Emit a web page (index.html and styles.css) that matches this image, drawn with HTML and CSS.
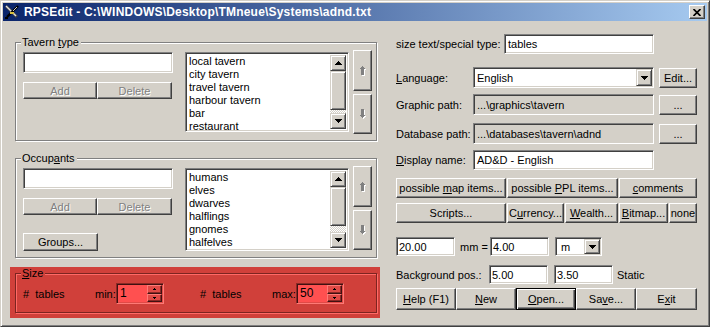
FILE: index.html
```html
<!DOCTYPE html>
<html lang="en">
<head>
  <meta charset="UTF-8" />
  <title>RPSEdit</title>
  <link rel="stylesheet" href="styles.css">
</head>
<body>

<div class="window">
  <div class="titlebar">
    <svg class="app-icon" viewBox="0 0 16 16" width="16" height="16">
      <line x1="2" y1="2" x2="13" y2="13" stroke="#404040" stroke-width="3"/>
      <line x1="2" y1="2" x2="12" y2="12" stroke="#e0e0e0" stroke-width="1.4"/>
      <line x1="14" y1="2" x2="3" y2="13" stroke="#000" stroke-width="2.4"/>
      <line x1="13" y1="3" x2="9" y2="7" stroke="#c8c8c8" stroke-width="1"/>
      <rect x="6" y="8" width="4" height="2" fill="#d8c040"/>
      <rect x="1" y="13" width="3" height="2" fill="#000"/>
    </svg>
    <span class="title">RPSEdit - C:\WINDOWS\Desktop\TMneue\Systems\adnd.txt</span>
    <span class="close-btn">
      <svg viewBox="0 0 8 7" width="8" height="7"><path d="M0.5 0 L7.5 7 M7.5 0 L0.5 7" stroke="#000" stroke-width="1.7"/></svg>
    </span>
  </div>

  <div class="client">
    <div class="left">

      <div class="group tavern">
        <span class="group-label">Tavern <u>t</u>ype</span>
        <div class="group-row">
          <div class="edit-col">
            <div class="field name-field"></div>
            <div class="btn-pair">
              <span class="btn disabled add">Add</span>
              <span class="btn disabled del">Delete</span>
            </div>
          </div>
          <div class="listbox">
            <ul class="items">
              <li>local tavern</li>
              <li>city tavern</li>
              <li>travel tavern</li>
              <li>harbour tavern</li>
              <li>bar</li>
              <li>restaurant</li>
            </ul>
            <div class="vscroll">
              <span class="sb-btn"><svg width="7" height="4" viewBox="0 0 7 4"><rect x="3" y="0" width="1" height="1"/><rect x="2" y="1" width="3" height="1"/><rect x="1" y="2" width="5" height="1"/><rect x="0" y="3" width="7" height="1"/></svg></span>
              <span class="sb-thumb"></span>
              <span class="sb-track"></span>
              <span class="sb-btn"><svg width="7" height="4" viewBox="0 0 7 4"><rect x="0" y="0" width="7" height="1"/><rect x="1" y="1" width="5" height="1"/><rect x="2" y="2" width="3" height="1"/><rect x="3" y="3" width="1" height="1"/></svg></span>
            </div>
          </div>
          <div class="move-col">
            <span class="btn move up"><svg width="6" height="10" viewBox="0 0 6 10"><g fill="#fff" transform="translate(1 1)"><rect x="2" y="0" width="1" height="1"/><rect x="1" y="1" width="3" height="1"/><rect x="0" y="2" width="5" height="1"/><rect x="1" y="3" width="3" height="6"/></g><g fill="#808080"><rect x="2" y="0" width="1" height="1"/><rect x="1" y="1" width="3" height="1"/><rect x="0" y="2" width="5" height="1"/><rect x="1" y="3" width="3" height="6"/></g></svg></span>
            <span class="btn move down"><svg width="6" height="10" viewBox="0 0 6 10"><g fill="#fff" transform="translate(1 1)"><rect x="1" y="0" width="3" height="6"/><rect x="0" y="6" width="5" height="1"/><rect x="1" y="7" width="3" height="1"/><rect x="2" y="8" width="1" height="1"/></g><g fill="#808080"><rect x="1" y="0" width="3" height="6"/><rect x="0" y="6" width="5" height="1"/><rect x="1" y="7" width="3" height="1"/><rect x="2" y="8" width="1" height="1"/></g></svg></span>
          </div>
        </div>
      </div>

      <div class="group occupants">
        <span class="group-label">Occup<u>a</u>nts</span>
        <div class="group-row">
          <div class="edit-col">
            <div class="field name-field"></div>
            <div class="btn-pair">
              <span class="btn disabled add">Add</span>
              <span class="btn disabled del">Delete</span>
            </div>
            <span class="btn groups-btn">Groups...</span>
          </div>
          <div class="listbox tall">
            <ul class="items">
              <li>humans</li>
              <li>elves</li>
              <li>dwarves</li>
              <li>halflings</li>
              <li>gnomes</li>
              <li>halfelves</li>
            </ul>
            <div class="vscroll">
              <span class="sb-btn"><svg width="7" height="4" viewBox="0 0 7 4"><rect x="3" y="0" width="1" height="1"/><rect x="2" y="1" width="3" height="1"/><rect x="1" y="2" width="5" height="1"/><rect x="0" y="3" width="7" height="1"/></svg></span>
              <span class="sb-thumb"></span>
              <span class="sb-track"></span>
              <span class="sb-btn"><svg width="7" height="4" viewBox="0 0 7 4"><rect x="0" y="0" width="7" height="1"/><rect x="1" y="1" width="5" height="1"/><rect x="2" y="2" width="3" height="1"/><rect x="3" y="3" width="1" height="1"/></svg></span>
            </div>
          </div>
          <div class="move-col">
            <span class="btn move up"><svg width="6" height="10" viewBox="0 0 6 10"><g fill="#fff" transform="translate(1 1)"><rect x="2" y="0" width="1" height="1"/><rect x="1" y="1" width="3" height="1"/><rect x="0" y="2" width="5" height="1"/><rect x="1" y="3" width="3" height="6"/></g><g fill="#808080"><rect x="2" y="0" width="1" height="1"/><rect x="1" y="1" width="3" height="1"/><rect x="0" y="2" width="5" height="1"/><rect x="1" y="3" width="3" height="6"/></g></svg></span>
            <span class="btn move down"><svg width="6" height="10" viewBox="0 0 6 10"><g fill="#fff" transform="translate(1 1)"><rect x="1" y="0" width="3" height="6"/><rect x="0" y="6" width="5" height="1"/><rect x="1" y="7" width="3" height="1"/><rect x="2" y="8" width="1" height="1"/></g><g fill="#808080"><rect x="1" y="0" width="3" height="6"/><rect x="0" y="6" width="5" height="1"/><rect x="1" y="7" width="3" height="1"/><rect x="2" y="8" width="1" height="1"/></g></svg></span>
          </div>
        </div>
      </div>

      <div class="size-panel">
        <div class="group red">
          <span class="group-label"><u>S</u>ize</span>
          <div class="size-row">
            <span class="sz-label">#&nbsp; tables</span>
            <span class="sz-bound">min:</span>
            <div class="spin">
              <span class="spin-val">1</span>
              <div class="spin-btns">
                <span class="spin-b"><svg width="3" height="2" viewBox="0 0 3 2"><rect x="1" y="0" width="1" height="1"/><rect x="0" y="1" width="3" height="1"/></svg></span>
                <span class="spin-b"><svg width="3" height="2" viewBox="0 0 3 2"><rect x="0" y="0" width="3" height="1"/><rect x="1" y="1" width="1" height="1"/></svg></span>
              </div>
            </div>
            <span class="sz-label second">#&nbsp; tables</span>
            <span class="sz-bound wide">max:</span>
            <div class="spin">
              <span class="spin-val">50</span>
              <div class="spin-btns">
                <span class="spin-b"><svg width="3" height="2" viewBox="0 0 3 2"><rect x="1" y="0" width="1" height="1"/><rect x="0" y="1" width="3" height="1"/></svg></span>
                <span class="spin-b"><svg width="3" height="2" viewBox="0 0 3 2"><rect x="0" y="0" width="3" height="1"/><rect x="1" y="1" width="1" height="1"/></svg></span>
              </div>
            </div>
          </div>
        </div>
      </div>

    </div>

    <div class="right">
      <div class="row r1">
        <span class="lbl lbl-size">size text/special type:</span>
        <div class="field f-size">tables</div>
      </div>
      <div class="row r2">
        <span class="lbl lbl-path"><u>L</u>anguage:</span>
        <div class="field combo f-path">
          <span class="combo-text">English</span>
          <span class="drop"><svg width="7" height="4" viewBox="0 0 7 4"><rect x="0" y="0" width="7" height="1"/><rect x="1" y="1" width="5" height="1"/><rect x="2" y="2" width="3" height="1"/><rect x="3" y="3" width="1" height="1"/></svg></span>
        </div>
        <span class="btn side-btn">Edit...</span>
      </div>
      <div class="row r3">
        <span class="lbl lbl-path">Graphic path:</span>
        <div class="field ro f-path">...\graphics\tavern</div>
        <span class="btn side-btn">...</span>
      </div>
      <div class="row r4">
        <span class="lbl lbl-path">Database path:</span>
        <div class="field ro f-path">...\databases\tavern\adnd</div>
        <span class="btn side-btn">...</span>
      </div>
      <div class="row r5">
        <span class="lbl lbl-path"><u>D</u>isplay name:</span>
        <div class="field f-path">AD&amp;D - English</div>
      </div>
      <div class="row r6">
        <span class="btn w110"><span>possible <u>m</u>ap items...</span></span>
        <span class="btn w111"><span>possible <u>P</u>PL items...</span></span>
        <span class="btn w78"><span><u>c</u>omments</span></span>
      </div>
      <div class="row r7">
        <span class="btn w110">Scripts...</span>
        <span class="btn w57"><span>C<u>u</u>rrency...</span></span>
        <span class="btn w53"><span><u>W</u>ealth...</span></span>
        <span class="btn w49"><span><u>B</u>itmap...</span></span>
        <span class="btn w28">none</span>
      </div>
      <div class="row r8">
        <div class="field f-num">20.00</div>
        <span class="mm">mm =</span>
        <div class="field f-num">4.00</div>
        <div class="field combo f-unit">
          <span class="combo-text">m</span>
          <span class="drop"><svg width="7" height="4" viewBox="0 0 7 4"><rect x="0" y="0" width="7" height="1"/><rect x="1" y="1" width="5" height="1"/><rect x="2" y="2" width="3" height="1"/><rect x="3" y="3" width="1" height="1"/></svg></span>
        </div>
      </div>
      <div class="row r9">
        <span class="lbl lbl-bg">Background pos.:</span>
        <div class="field f-num">5.00</div>
        <div class="field f-num f-gap">3.50</div>
        <span class="static">Static</span>
      </div>
      <div class="row r10">
        <span class="btn w60"><span><u>H</u>elp (F1)</span></span>
        <span class="btn w60"><span><u>N</u>ew</span></span>
        <span class="btn w60 default"><span><u>O</u>pen...</span></span>
        <span class="btn w60"><span>Sa<u>v</u>e...</span></span>
        <span class="btn w61"><span>E<u>x</u>it</span></span>
      </div>
    </div>
  </div>
</div>

</body>
</html>
```

FILE: styles.css
```css
body {
  margin: 0;
  font-family: "Liberation Sans", Arial, sans-serif;
  font-size: 11px;
  color: #000;
  background: #d4d0c8;
}

u {
  text-underline-offset: 1px;
}

svg {
  shape-rendering: crispEdges;
}

.window {
  box-sizing: border-box;
  width: 710px;
  height: 327px;
  padding: 2px;
  background: #d4d0c8;
  border: 1px solid;
  border-color: #d4d0c8 #404040 #404040 #d4d0c8;
  box-shadow: inset 1px 1px #fff, inset -1px -1px #808080;
}

/* title bar */
.titlebar {
  height: 18px;
  display: flex;
  align-items: center;
  padding-left: 1px;
  background: linear-gradient(to right, #0a246a, #a6caf0);
  color: #fff;
}

.app-icon {
  flex: none;
  shape-rendering: auto;
}

.title {
  flex: 1;
  margin-left: 4px;
  font-weight: bold;
  font-size: 12px;
  letter-spacing: 0.2px;
  white-space: nowrap;
}

.close-btn {
  box-sizing: border-box;
  width: 16px;
  height: 14px;
  margin-right: 2px;
  display: flex;
  align-items: center;
  justify-content: center;
  background: #d4d0c8;
  border: 1px solid;
  border-color: #fff #404040 #404040 #fff;
  box-shadow: inset -1px -1px #808080;
}

.close-btn svg {
  shape-rendering: auto;
}

/* common widgets */
.btn {
  box-sizing: border-box;
  display: flex;
  align-items: center;
  justify-content: center;
  background: #d4d0c8;
  border: 1px solid;
  border-color: #fff #404040 #404040 #fff;
  box-shadow: inset -1px -1px #808080;
  white-space: nowrap;
}

.btn.disabled {
  color: #808080;
  text-shadow: 1px 1px 0 #fff;
}

.btn.default {
  border-color: #000;
  box-shadow: inset 1px 1px #fff, inset -1px -1px #404040, inset -2px -2px #808080;
}

.field {
  box-sizing: border-box;
  display: flex;
  align-items: center;
  padding: 0 3px;
  background: #fff;
  border: 1px solid;
  border-color: #808080 #fff #fff #808080;
  box-shadow: inset 1px 1px #404040, inset -1px -1px #d4d0c8;
  white-space: nowrap;
  overflow: hidden;
}

.field.ro {
  background: #d4d0c8;
}

.combo {
  align-items: stretch;
  padding: 1px 1px 1px 3px;
}

.combo-text {
  flex: 1;
  display: flex;
  align-items: center;
}

.drop,
.sb-btn,
.sb-thumb {
  box-sizing: border-box;
  display: flex;
  align-items: center;
  justify-content: center;
  background: #d4d0c8;
  border: 1px solid;
  border-color: #d4d0c8 #404040 #404040 #d4d0c8;
  box-shadow: inset 1px 1px #fff, inset -1px -1px #808080;
}

.drop {
  width: 16px;
  flex: none;
}

/* left column */
.client {
  display: flex;
  padding-left: 7px;
}

.left {
  width: 370px;
  flex: none;
}

.group {
  position: relative;
  box-sizing: border-box;
  width: 362px;
  margin-left: 5px;
  border: 1px solid #808080;
  box-shadow: inset 1px 1px #fff, 1px 1px 0 #fff;
}

.group-label {
  position: absolute;
  top: -7px;
  left: 5px;
  padding: 0 2px 0 1px;
  line-height: 13px;
  background: #d4d0c8;
}

.tavern {
  margin-top: 21px;
  height: 99px;
}

.occupants {
  margin-top: 17px;
  height: 100px;
}

.group-row {
  display: flex;
  align-items: flex-start;
  padding: 7px 0 0 7px;
}

.edit-col {
  width: 150px;
  margin-top: 2px;
  display: flex;
  flex-direction: column;
}

.name-field {
  height: 21px;
}

.btn-pair {
  display: flex;
  margin-top: 9px;
}

.btn.add {
  width: 74px;
  height: 17px;
}

.btn.del {
  width: 75px;
  height: 17px;
}

.groups-btn {
  width: 75px;
  height: 18px;
  margin-top: 18px;
}

.listbox {
  box-sizing: border-box;
  display: flex;
  width: 164px;
  height: 80px;
  margin: 2px 0 0 12px;
  padding: 2px;
  background: #fff;
  border: 1px solid;
  border-color: #808080 #fff #fff #808080;
  box-shadow: inset 1px 1px #404040, inset -1px -1px #d4d0c8;
}

.listbox.tall {
  height: 83px;
}

.items {
  flex: 1;
  margin: 0;
  padding: 0 0 0 1px;
  list-style: none;
  line-height: 13px;
}

.vscroll {
  width: 16px;
  display: flex;
  flex-direction: column;
}

.sb-btn {
  height: 16px;
  flex: none;
}

.sb-thumb {
  height: 39px;
  flex: none;
}

.sb-track {
  flex: 1;
  background: repeating-conic-gradient(#d4d0c8 0 25%, #fff 0 50%) 0 0 / 2px 2px;
}

.move-col {
  display: flex;
  flex-direction: column;
  gap: 3px;
  margin-left: 4px;
}

.btn.move {
  width: 19px;
}

.btn.up {
  height: 41px;
}

.btn.down {
  height: 40px;
}

/* size panel */
.size-panel {
  width: 370px;
  box-sizing: border-box;
  margin-top: 9px;
  padding: 6px 0 5px 5px;
  background: #d0403a;
}

.group.red {
  height: 40px;
  margin-left: 0;
  border-color: #7c2420;
  box-shadow: inset 1px 1px #ff6a66, 1px 1px 0 #ff6a66;
}

.group.red .group-label {
  background: #d0403a;
}

.size-row {
  display: flex;
  align-items: center;
  padding: 9px 0 0 7px;
}

.sz-label {
  width: 72px;
}

.sz-label.second {
  margin-left: 36px;
}

.sz-bound {
  width: 21px;
}

.sz-bound.wide {
  width: 24px;
}

.spin {
  box-sizing: border-box;
  display: flex;
  width: 48px;
  height: 21px;
  padding: 1px;
  background: #ff5050;
  border: 1px solid;
  border-color: #8a2a26 #ff7a76 #ff7a76 #8a2a26;
  box-shadow: inset 1px 1px #401010, inset -1px -1px #e04a46;
}

.spin-val {
  flex: 1;
  padding-left: 2px;
  font-size: 12px;
  line-height: 16px;
}

.spin-btns {
  width: 15px;
  display: flex;
  flex-direction: column;
}

.spin-b {
  box-sizing: border-box;
  flex: 1;
  display: flex;
  align-items: center;
  justify-content: center;
  background: #e04a46;
  border: 1px solid;
  border-color: #ff7a76 #401010 #401010 #ff7a76;
  box-shadow: inset -1px -1px #8a2a26;
}

/* right column */
.right {
  width: 301px;
  margin-left: 16px;
  display: flex;
  flex-direction: column;
}

.row {
  display: flex;
  align-items: center;
  height: 21px;
}

.lbl {
  flex: none;
}

.lbl-size {
  width: 108px;
}

.lbl-path {
  width: 77px;
}

.lbl-bg {
  width: 93px;
}

.f-size {
  width: 150px;
  height: 20px;
}

.f-path {
  width: 181px;
  height: 21px;
}

.side-btn {
  width: 38px;
  height: 20px;
  margin-left: 5px;
}

.r1 { margin-top: 13px; height: 20px; }
.r2 { margin-top: 13px; }
.r3 { margin-top: 6px; }
.r4 { margin-top: 8px; }
.r5 { margin-top: 6px; height: 20px; }
.r5 .f-path { height: 20px; }
.r6 { margin-top: 8px; height: 20px; gap: 1px; }
.r7 { margin-top: 5px; height: 20px; gap: 1px; }
.r8 { margin-top: 14px; height: 19px; }
.r9 { margin-top: 9px; height: 19px; }
.r10 { margin-top: 4px; height: 22px; }

.r6 .btn,
.r7 .btn {
  height: 20px;
}

.r10 .btn {
  height: 22px;
}

.w110 { width: 110px; }
.w111 { width: 111px; }
.w78 { width: 78px; }
.w57 { width: 57px; }
.w53 { width: 53px; }
.w49 { width: 49px; }
.w28 { width: 28px; }
.w60 { width: 60px; }
.w61 { width: 61px; }

.f-num {
  width: 59px;
  height: 19px;
  padding-left: 2px;
}

.f-gap {
  margin-left: 6px;
}

.mm {
  width: 30px;
  padding-left: 5px;
}

.f-unit {
  width: 47px;
  height: 19px;
  margin-left: 6px;
}

.f-unit .combo-text {
  padding-left: 2px;
}

.static {
  margin-left: 4px;
}
```
